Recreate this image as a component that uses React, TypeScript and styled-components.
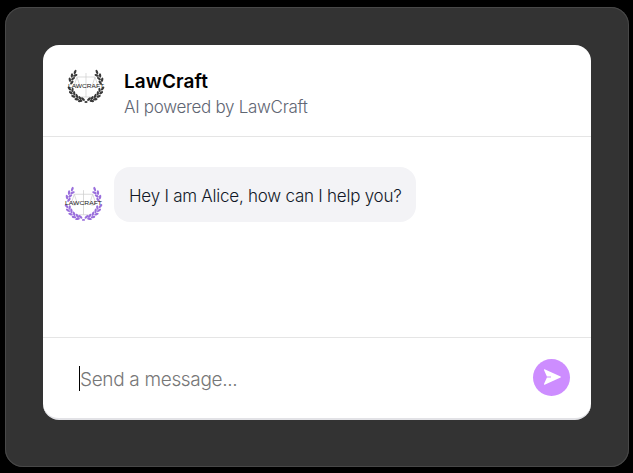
import React from "react";
import styled, { createGlobalStyle } from "styled-components";

const Global = createGlobalStyle`
  html, body { margin: 0; padding: 0; background: #000; }
  body { width: 633px; height: 473px; overflow: hidden; font-family: Inter, "Liberation Sans", sans-serif; }
`;

const Page = styled.div`
  width: 633px;
  height: 473px;
  padding: 7px 4px 6px 5px;
  box-sizing: border-box;
`;

const Panel = styled.div`
  height: 100%;
  background: #333333;
  border-radius: 18px;
  box-shadow: inset 0 0 0 1px #484848;
  padding: 38px 38px 47px 38px;
  box-sizing: border-box;
`;

const Card = styled.div`
  height: 100%;
  background: #fff;
  border-radius: 16px;
  border-bottom: 2px solid #e2e2e6;
  box-sizing: border-box;
  display: flex;
  flex-direction: column;
  overflow: hidden;
`;

const Header = styled.header`
  height: 92px;
  flex: none;
  box-sizing: border-box;
  border-bottom: 1px solid #e5e5e5;
  display: flex;
  align-items: center;
  padding: 0 0 8px 23px;
  gap: 18px;
`;

const HeaderText = styled.div`
  display: flex;
  flex-direction: column;
  gap: 4px;
  margin-top: 14px;
`;

const Title = styled.div`
  font-size: 19px;
  line-height: 22px;
  font-weight: 600;
  letter-spacing: 0.1px;
  color: #000;
`;

const Subtitle = styled.div`
  font-size: 17px;
  line-height: 20px;
  font-weight: 300;
  color: #5f6673;
  letter-spacing: -0.3px;
`;

const Chat = styled.main`
  flex: 1;
  padding: 30px 0 0 20px;
  display: flex;
  align-items: flex-start;
  gap: 10px;
`;

const AvatarSlot = styled.div`
  margin-top: 17px;
  display: flex;
`;

const Bubble = styled.div`
  background: #f3f3f6;
  border-radius: 16px;
  height: 55px;
  box-sizing: border-box;
  padding: 2px 15px 0;
  display: flex;
  align-items: center;
  font-size: 17px;
  font-weight: 300;
  letter-spacing: -0.24px;
  color: #111827;
`;

const Footer = styled.footer`
  height: 81px;
  flex: none;
  box-sizing: border-box;
  border-top: 1px solid #e5e5e5;
  display: flex;
  align-items: center;
  padding: 0 21px 0 36px;
`;

const Caret = styled.span`
  width: 1px;
  height: 25px;
  background: #000;
  flex: none;
`;

const Input = styled.input`
  flex: 1;
  min-width: 0;
  border: 0;
  outline: 0;
  padding: 2px 0 0;
  background: transparent;
  caret-color: transparent;
  font-family: inherit;
  font-size: 19px;
  font-weight: 300;
  letter-spacing: -0.33px;
  color: #111;
  &::placeholder { color: #777; opacity: 1; }
`;

const SendButton = styled.button`
  width: 37px;
  height: 37px;
  flex: none;
  border: 0;
  padding: 0 0 0 1px;
  margin-bottom: 2px;
  border-radius: 50%;
  background: #cd8dff;
  display: flex;
  align-items: center;
  justify-content: center;
`;

const Leaf = ({ a, side, r, color }: { a: number; side: number; r: number; color: string }) => {
  const rad = (a * Math.PI) / 180;
  const cx = 20 + side * r * Math.cos(rad);
  const cy = 18 + r * Math.sin(rad);
  const rot = side * (a + (r > 15 ? 28 : -28));
  return <ellipse cx={cx} cy={cy} rx="1.15" ry="2.3" transform={`rotate(${rot} ${cx} ${cy})`} fill={color} />;
};

const LogoLetters = styled.text`
  font-family: "Liberation Sans", sans-serif;
  font-size: 5.6px;
  fill: #222;
`;

const Logo = ({ color, size }: { color: string; size: number }) => (
  <svg width={size} height={size} viewBox="0 0 40 40" aria-hidden="true">
    <g stroke="#cdcdcd" strokeWidth="0.7" fill="none">
      <path d="M20 6V30M15 30H25M11 10H29" />
      <path d="M11 10L8 19A3.5 3.5 0 0 0 14 19ZM29 10L26 19A3.5 3.5 0 0 0 32 19Z" />
    </g>
    {[-50, -34, -18, 12, 27, 42, 57, 70].map((a) => (
      <React.Fragment key={a}>
        <Leaf a={a} side={1} r={17} color={color} />
        <Leaf a={a} side={-1} r={17} color={color} />
        <Leaf a={a + 8} side={1} r={14.4} color={color} />
        <Leaf a={a + 8} side={-1} r={14.4} color={color} />
      </React.Fragment>
    ))}
    <ellipse cx="20" cy="35" rx="1.6" ry="0.9" fill={color} />
    <LogoLetters x="20" y="20.5" textAnchor="middle" textLength={36} lengthAdjust="spacingAndGlyphs">
      LAWCRAFT
    </LogoLetters>
  </svg>
);

export default function App() {
  return (
    <Page>
      <Global />
      <Panel>
        <Card>
          <Header>
            <Logo color="#3a3a3a" size={40} />
            <HeaderText>
              <Title>LawCraft</Title>
              <Subtitle>AI powered by LawCraft</Subtitle>
            </HeaderText>
          </Header>
          <Chat>
            <AvatarSlot>
              <Logo color="#9a6fdc" size={41} />
            </AvatarSlot>
            <Bubble>Hey I am Alice, how can I help you?</Bubble>
          </Chat>
          <Footer>
            <Caret />
            <Input placeholder="Send a message..." readOnly />
            <SendButton aria-label="Send">
              <svg width="20" height="20" viewBox="0 0 20 20">
                <path
                  d="M2.6 2.2C2.2 2 1.8 2.4 2 2.9L4.9 9.5H9V10.5H4.9L2 17.1C1.8 17.6 2.2 18 2.6 17.8L18.6 10.4C19 10.2 19 9.8 18.6 9.6Z"
                  fill="#fff"
                />
              </svg>
            </SendButton>
          </Footer>
        </Card>
      </Panel>
    </Page>
  );
}
